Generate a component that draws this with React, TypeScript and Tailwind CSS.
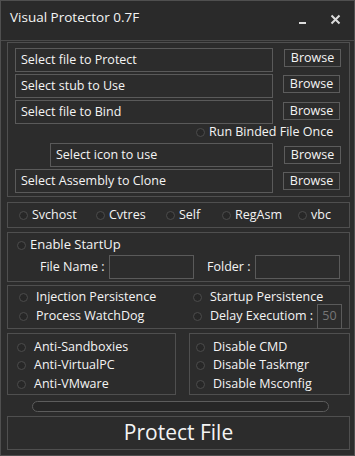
import React from "react";

const radios = [
  { label: "Svchost", w: "w-[77px]" },
  { label: "Cvtres", w: "w-[70px]" },
  { label: "Self", w: "w-[56px]" },
  { label: "RegAsm", w: "w-[76px]" },
  { label: "vbc", w: "w-[40px]" },
];

function Dot() {
  return <span className="inline-block w-[9px] h-[9px] shrink-0 rounded-full border border-[#4c4c4c] bg-[#272727]" />;
}

function Browse({ cls }: { cls: string }) {
  return (
    <div className={`w-[57px] h-[18px] border border-[#5c5c5c] flex items-center justify-center ${cls}`}>
      Browse
    </div>
  );
}

function FileRow({ label, box, btn }: { label: string; box: string; btn: string }) {
  return (
    <div className="flex items-start">
      <div className={`h-[24px] border border-[#5a5a5a] flex items-center pl-[5px] ${box}`}>{label}</div>
      <Browse cls={btn} />
    </div>
  );
}

export default function App() {
  return (
    <div className="w-[355px] h-[456px] overflow-hidden bg-[#2c2c2c] border border-[#4f4f4f] text-[12.5px] text-[#f4f4f4] font-['Open_Sans','Noto_Sans',sans-serif]">
      {/* title bar */}
      <div className="h-[40px] border-b border-[#4a4a4a] bg-[#2a2a2a] flex items-start relative">
        <span className="ml-[9px] mt-[6px] text-[13.5px]">Visual Protector 0.7F</span>
        <span className="absolute left-[298px] top-[21px] w-[7px] h-[2px] bg-[#dcdcdc]" />
        <svg className="absolute left-[329px] top-[13px]" width="11" height="11" viewBox="0 0 11 11">
          <path d="M1.5 1.5 L9.5 9.5 M9.5 1.5 L1.5 9.5" stroke="#dcdcdc" strokeWidth="2" />
        </svg>
      </div>

      <div className="pl-[6px]">
        {/* files */}
        <div className="mt-[1px] w-[343px] border border-[#4f4f4f] pt-[5px] pb-[3px] pl-[7px] flex flex-col gap-[2px]">
          <FileRow label="Select file to Protect" box="w-[258px]" btn="ml-[11px] mt-[1px]" />
          <FileRow label="Select stub to Use" box="w-[258px]" btn="ml-[10px] mt-[1px]" />
          <FileRow label="Select file to Bind" box="w-[258px]" btn="ml-[10px] mt-[2px]" />
          <div className="h-[17px] -mt-[2px] flex items-center pl-[181px] gap-[4px]">
            <Dot />
            <span>Run Binded File Once</span>
          </div>
          <div className="pl-[35px]">
            <FileRow label="Select icon to use" box="w-[223px]" btn="ml-[11px] mt-[3px]" />
          </div>
          <FileRow label="Select Assembly to Clone" box="w-[258px]" btn="ml-[10px] mt-[3px]" />
        </div>

        {/* injection target */}
        <div className="mt-[5px] w-[343px] h-[26px] border border-[#4f4f4f] flex items-center pl-[11px]">
          {radios.map((r) => (
            <div key={r.label} className={`flex items-center gap-[4px] shrink-0 ${r.w}`}>
              <Dot />
              <span>{r.label}</span>
            </div>
          ))}
        </div>

        {/* startup */}
        <div className="mt-[4px] w-[343px] h-[50px] border border-[#4f4f4f] flex flex-col">
          <div className="flex items-center gap-[4px] pl-[9px] mt-[5px] h-[14px]">
            <Dot />
            <span className="text-[13px]">Enable StartUp</span>
          </div>
          <div className="flex items-center mt-[3px]">
            <span className="ml-[32px] w-[69px]">File Name :</span>
            <div className="w-[85px] h-[24px] border border-[#5a5a5a]" />
            <span className="ml-[13px] w-[48px]">Folder :</span>
            <div className="w-[85px] h-[24px] border border-[#5a5a5a]" />
          </div>
        </div>

        {/* persistence */}
        <div className="mt-[3px] w-[343px] h-[44px] border border-[#4f4f4f] flex">
          <div className="w-[185px] pl-[11px] pt-[2px] flex flex-col gap-[1px]">
            <div className="h-[18px] flex items-center gap-[8px]"><Dot /><span>Injection Persistence</span></div>
            <div className="h-[18px] flex items-center gap-[8px]"><Dot /><span>Process WatchDog</span></div>
          </div>
          <div className="flex flex-col pt-[2px]">
            <div className="h-[18px] flex items-center gap-[8px]"><Dot /><span>Startup Persistence</span></div>
            <div className="flex items-start">
              <div className="h-[18px] mt-[1px] flex items-center gap-[8px] w-[124px]"><Dot /><span>Delay Executiom :</span></div>
              <div className="w-[25px] h-[25px] -mt-[2px] border border-[#5a5a5a] flex items-center justify-center text-[#777]">50</div>
            </div>
          </div>
        </div>

        {/* anti / disable */}
        <div className="mt-[4px] flex gap-[13px]">
          <div className="w-[169px] h-[62px] border border-[#4f4f4f] pl-[9px] pt-[4px] flex flex-col">
            {["Anti-Sandboxies", "Anti-VirtualPC", "Anti-VMware"].map((t) => (
              <div key={t} className="h-[18.5px] flex items-center gap-[8px]"><Dot /><span>{t}</span></div>
            ))}
          </div>
          <div className="w-[161px] h-[62px] border border-[#4f4f4f] pl-[6px] pt-[4px] flex flex-col">
            {["Disable CMD", "Disable Taskmgr", "Disable Msconfig"].map((t) => (
              <div key={t} className="h-[18.5px] flex items-center gap-[8px]"><Dot /><span>{t}</span></div>
            ))}
          </div>
        </div>

        {/* progress */}
        <div className="mt-[6px] ml-[25px] w-[297px] h-[11px] rounded-full border border-[#5c5c5c] bg-[#262626]" />

        {/* protect */}
        <div className="mt-[4px] w-[343px] h-[34px] border border-[#4f4f4f] flex items-center justify-center text-[21px]">
          Protect File
        </div>
      </div>
    </div>
  );
}
